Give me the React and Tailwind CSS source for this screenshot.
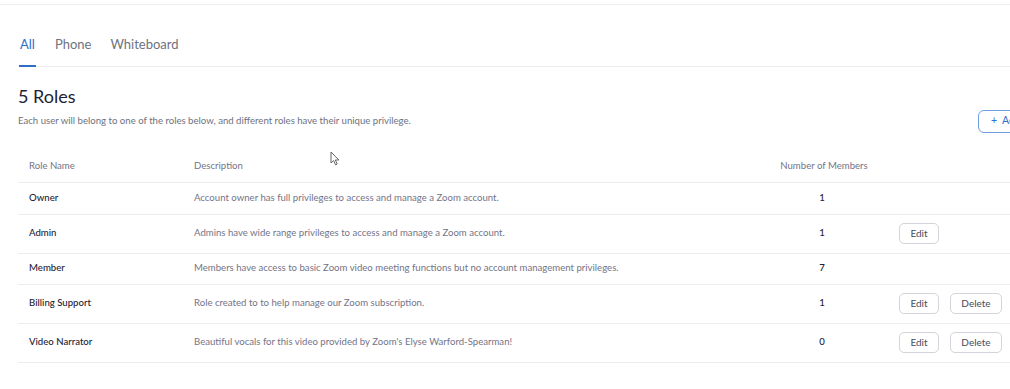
import React from "react";

const roles = [
  { name: "Owner", desc: "Account owner has full privileges to access and manage a Zoom account.", count: 1, h: "h-[32px]", edit: false, del: false },
  { name: "Admin", desc: "Admins have wide range privileges to access and manage a Zoom account.", count: 1, h: "h-[39px]", edit: true, del: false },
  { name: "Member", desc: "Members have access to basic Zoom video meeting functions but no account management privileges.", count: 7, h: "h-[31px]", edit: false, del: false },
  { name: "Billing Support", desc: "Role created to to help manage our Zoom subscription.", count: 1, h: "h-[39px]", edit: true, del: true },
  { name: "Video Narrator", desc: "Beautiful vocals for this video provided by Zoom's Elyse Warford-Spearman!", count: 0, h: "h-[39px]", edit: true, del: true },
];

const Btn = ({ children, w }) => (
  <button className={`${w} h-[21px] rounded-[5px] border border-[#d4d4dc] bg-white text-[10px] text-[#4a4a5a]`}>
    {children}
  </button>
);

const App = () => {
  return (
    <div className="relative w-[1010px] h-[389px] overflow-hidden bg-white font-['Lato','Noto_Sans',sans-serif]">
      <div className="h-[5px] border-b border-[#eeeeee]"></div>

      <div className="w-[1100px] pl-[18px] pt-[30px]">
        {/* Tabs */}
        <div className="flex gap-[19px] border-b border-[#ededf0] pl-[1px] text-[13px]">
          <div className="relative -mb-[1px] border-b-2 border-[#2f6fc7] pb-[10px] px-[1px] text-[#2f6fc7]">All</div>
          <div className="pb-[11px] text-[#6e7280]">Phone</div>
          <div className="pb-[11px] text-[#6e7280]">Whiteboard</div>
        </div>

        {/* Heading */}
        <div className="flex items-end">
          <div className="w-[960px] pt-[19px]">
            <h1 className="text-[18px] leading-[20px] text-[#232333]">5 Roles</h1>
            <p className="mt-[8px] text-[9.6px] leading-[14px] text-[#6e7280]">
              Each user will belong to one of the roles below, and different roles have their unique privilege.
            </p>
          </div>
          <button className="h-[23px] w-[84px] -mb-[5px] rounded-[6px] border border-[#6e9ee0] pl-[12px] text-left text-[10.5px] text-[#2f6fc7]">
            +&nbsp;&nbsp;Add Role
          </button>
        </div>

        {/* Table */}
        <div className="mt-[23px] text-[9.6px]">
          <div className="grid h-[32px] grid-cols-[165px_587px_108px_1fr] items-center border-b border-[#ededf0] text-[#747487]">
            <div className="pl-[11px]">Role Name</div>
            <div className="pl-[11px]">Description</div>
            <div className="text-center">Number of Members</div>
            <div></div>
          </div>
          {roles.map((r) => (
            <div
              key={r.name}
              className={`grid ${r.h} grid-cols-[165px_587px_108px_1fr] items-center border-b border-[#ededf0]`}
            >
              <div className="pl-[11px] font-medium text-[#232333]">{r.name}</div>
              <div className="pl-[11px] text-[#747487]">{r.desc}</div>
              <div className="pr-[4px] text-center font-medium text-[#232333]">{r.count}</div>
              <div className="flex gap-[11px] pl-[21px]">
                {r.edit && <Btn w="w-[40px]">Edit</Btn>}
                {r.del && <Btn w="w-[52px]">Delete</Btn>}
              </div>
            </div>
          ))}
        </div>
      </div>

      {/* mouse cursor */}
      <svg className="absolute left-[330px] top-[151px]" width="10" height="15" viewBox="0 0 10 15">
        <path d="M1 1 L1 12 L3.6 9.6 L5.6 13.8 L7.2 13 L5.3 9 L8.8 9 Z" fill="#fff" stroke="#555" strokeWidth="0.9" strokeLinejoin="round" />
      </svg>
    </div>
  );
};

export default App;
